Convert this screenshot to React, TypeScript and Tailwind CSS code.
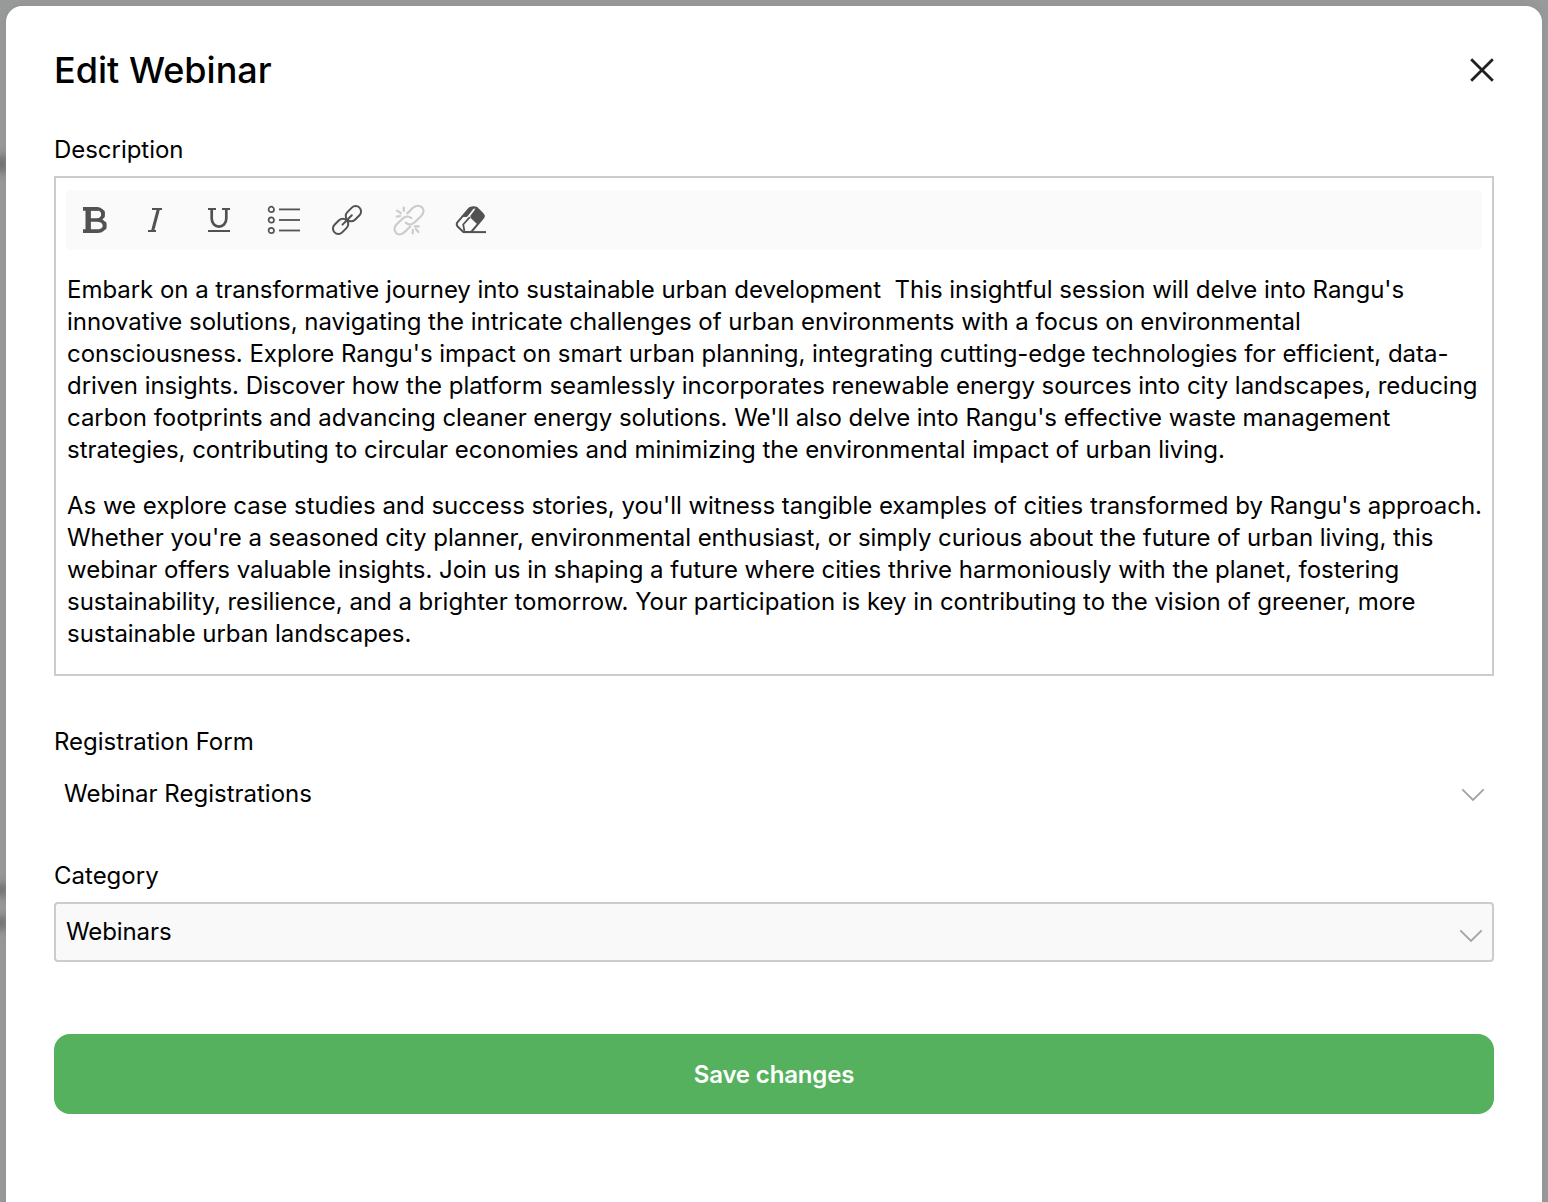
import type { ReactNode } from "react";

// newlines are kept by whitespace-pre-line
const DESCRIPTION = [
  `Embark on a transformative journey into sustainable urban development \u00a0This insightful session will delve into Rangu's
innovative solutions, navigating the intricate challenges of urban environments with a focus on environmental
consciousness. Explore Rangu's impact on smart urban planning, integrating cutting-edge technologies for efficient, data-
driven insights. Discover how the platform seamlessly incorporates renewable energy sources into city landscapes, reducing
carbon footprints and advancing cleaner energy solutions. We'll also delve into Rangu's effective waste management
strategies, contributing to circular economies and minimizing the environmental impact of urban living.`,
  `As we explore case studies and success stories, you'll witness tangible examples of cities transformed by Rangu's approach.
Whether you're a seasoned city planner, environmental enthusiast, or simply curious about the future of urban living, this
webinar offers valuable insights. Join us in shaping a future where cities thrive harmoniously with the planet, fostering
sustainability, resilience, and a brighter tomorrow. Your participation is key in contributing to the vision of greener, more
sustainable urban landscapes.`,
];

function ToolButton({ label, width, disabled, children }: { label: string; width: string; disabled?: boolean; children: ReactNode }) {
  return (
    <button
      type="button"
      aria-label={label}
      disabled={disabled}
      className={`flex h-9 shrink-0 items-center justify-center ${width} ${disabled ? "text-[#cbcbcb]" : "text-[#525252]"}`}
    >
      {children}
    </button>
  );
}

function BoldIcon() {
  return (
    <svg width="28" height="36" viewBox="0 0 28 36" fill="none" stroke="currentColor">
      <path d="M2 6.8H17M2 29.2H17" strokeWidth="3.8" />
      <path d="M7.2 6V30" strokeWidth="5.4" />
      <path d="M9 6.7H15.5C24.2 6.7 24.2 18 15.5 18H9M15.5 18C26 18 26 29.2 16.5 29.2" strokeWidth="3.6" />
      <path d="M22 9.8V14.6M23.8 21.2V26" strokeWidth="3.4" strokeLinecap="round" />
    </svg>
  );
}

function ItalicIcon() {
  return (
    <svg width="20" height="36" viewBox="0 0 20 36" fill="none" stroke="currentColor">
      <path d="M7 7H17M3 29H11" strokeWidth="2" />
      <path d="M13.4 7L7.6 29" strokeWidth="3" />
    </svg>
  );
}

function UnderlineIcon() {
  return (
    <svg width="24" height="36" viewBox="0 0 24 36" fill="none" stroke="currentColor">
      <path d="M1 7H9M15 7H23M1 29H23" strokeWidth="2" />
      <path d="M4.7 7V16.5C4.7 27.3 19.3 27.3 19.3 16.5V7" strokeWidth="2.7" />
    </svg>
  );
}

function ListIcon() {
  return (
    <svg width="34" height="36" viewBox="0 0 34 36" fill="none" stroke="currentColor">
      {[7.4, 18, 28.5].map((y) => (
        <g key={y}>
          <circle cx="4.3" cy={y} r="2.7" strokeWidth="1.7" />
          <path d={`M12 ${y}H33`} strokeWidth="1.8" />
        </g>
      ))}
    </svg>
  );
}

function LinkIcon() {
  return (
    <svg width="32" height="36" viewBox="0 0 32 36" fill="none" stroke="currentColor" strokeWidth="2">
      <rect x="-8.6" y="-5.4" width="17.2" height="10.8" rx="5.4" transform="translate(22.4 11.7) rotate(-45)" />
      <rect x="-8.6" y="-5.4" width="17.2" height="10.8" rx="5.4" transform="translate(9.6 24.3) rotate(-45)" />
      <path d="M11.5 22.6L20.8 13.3" strokeLinecap="round" />
    </svg>
  );
}

function UnlinkIcon() {
  return (
    <svg width="32" height="36" viewBox="0 0 32 36" fill="none" stroke="currentColor" strokeWidth="2.2" strokeLinecap="round">
      <path d="M14.3 11.4L20 5.8C22.8 3.2 26.5 3.1 28.9 5.3C31.2 7.6 30.9 11.1 28.2 14L21.7 20.3C18.8 23 15.2 23 12.8 20.6" />
      <path d="M18.3 16C15.8 13.7 12.2 14.1 9.5 16.7L3.7 22.3C1 25.2 0.9 28.7 3.2 31C5.6 33.1 9.2 32.6 11.9 29.8L17.2 24.4" />
      <path d="M4 8.7L7.8 11.2M3.8 14.6L7.2 14M10.8 5.6V9" />
      <path d="M21.8 24.3H25.8M19.8 27.8V31.4M22.8 26.9L25.4 30" />
    </svg>
  );
}

function EraserIcon() {
  return (
    <svg width="32" height="36" viewBox="0 0 32 36" fill="none" stroke="currentColor" strokeWidth="2" strokeLinejoin="round">
      <path d="M14.5 6.2C16 5 20 4.8 21.5 5.8L28 12.3C29 13.4 29 14.6 28.1 15.8L16.2 30H8.4L2.4 24.2C1.6 23 1.6 21.5 2.4 20.3Z" />
      <path d="M21.4 6.8L28.4 13.6L22.7 21.4L16.4 15.2Z" fill="currentColor" />
      <path d="M14.8 6L19.4 5.8L11.8 14.6L7.6 14.4Z" fill="currentColor" strokeWidth="1" />
      <path d="M14.8 15.2L8.2 22.5L9.4 28.8M15.6 14.5L21 7.5" strokeWidth="1.8" />
      <path d="M8 30.1H31" />
      <path d="M14.2 13.7L19.2 7.2" stroke="#fafafa" strokeWidth="1.5" />
    </svg>
  );
}

function Chevron() {
  return (
    <svg width="24" height="14" viewBox="0 0 24 14" fill="none" stroke="#a3a3a3" strokeWidth="1.8">
      <path d="M1.3 1.3L12 12L22.7 1.3" />
    </svg>
  );
}

export default function App() {
  return (
    <div className="relative flex h-[1202px] w-[1548px] overflow-hidden bg-[#989a99] px-1.5 pt-1.5 font-['Inter',sans-serif] text-2xl text-black">
      {/* page content blurred behind the dialog */}
      <div className="absolute top-[156px] -left-2 h-4 w-4 bg-[#6f7170] blur-[4px]" />
      <div className="absolute top-[884px] -left-2 h-3 w-4 bg-[#6f7170] blur-[4px]" />
      <div className="absolute top-[917px] -left-2 h-3 w-4 bg-[#6f7170] blur-[4px]" />

      <div className="relative flex w-full flex-col rounded-t-2xl bg-white px-12 shadow-[0_0_8px_rgba(0,0,0,0.06)]">
        <header className="flex h-32 items-center justify-between">
          <h1 className="text-4xl font-medium">Edit Webinar</h1>
          <button type="button" aria-label="Close" className="text-[#1f2020]">
            <svg width="24" height="24" viewBox="0 0 24 24" fill="none" stroke="currentColor" strokeWidth="2.8">
              <path d="M1.2 1.2L22.8 22.8M22.8 1.2L1.2 22.8" />
            </svg>
          </button>
        </header>

        <label className="block h-[42px] leading-8 tracking-[-0.04px]">Description</label>
        <div className="h-[500px] border-2 border-[#cccccc] px-2.5 pt-3">
          <div className="flex h-[60px] items-center rounded bg-[#fafafa] pl-[15px]">
            <ToolButton label="Bold" width="w-7"><BoldIcon /></ToolButton>
            <ToolButton label="Italic" width="w-5 ml-9"><ItalicIcon /></ToolButton>
            <ToolButton label="Underline" width="w-6 ml-[42px]"><UnderlineIcon /></ToolButton>
            <ToolButton label="Bulleted list" width="w-[34px] ml-9"><ListIcon /></ToolButton>
            <ToolButton label="Insert link" width="w-8 ml-[30px]"><LinkIcon /></ToolButton>
            <ToolButton label="Remove link" width="w-8 ml-[30px]" disabled><UnlinkIcon /></ToolButton>
            <ToolButton label="Clear formatting" width="w-8 ml-[30px]"><EraserIcon /></ToolButton>
          </div>
          <div className="mt-6 -mr-2 space-y-6 pl-px leading-8 tracking-[-0.03px]">
            {DESCRIPTION.map((text) => (
              <p key={text} className="whitespace-pre-line">{text}</p>
            ))}
          </div>
        </div>

        <label className="mt-[50px] block leading-8">Registration Form</label>
        <div className="mt-3.5 flex h-11 items-center justify-between pr-[9px] pl-2.5">
          <span>Webinar Registrations</span>
          <span className="pt-px"><Chevron /></span>
        </div>

        <label className="mt-11 block leading-8">Category</label>
        <div className="mt-2.5 flex h-[60px] items-center justify-between rounded border-2 border-[#cccccc] bg-[#f9f9f9] pr-[9px] pl-2.5">
          <span className="tracking-[-0.1px]">Webinars</span>
          <span className="pt-2"><Chevron /></span>
        </div>

        <button type="button" className="mt-[72px] h-20 w-full shrink-0 rounded-2xl bg-[#55b15d] pt-0.5 font-semibold tracking-[-0.15px] text-white">
          Save changes
        </button>
      </div>
    </div>
  );
}
